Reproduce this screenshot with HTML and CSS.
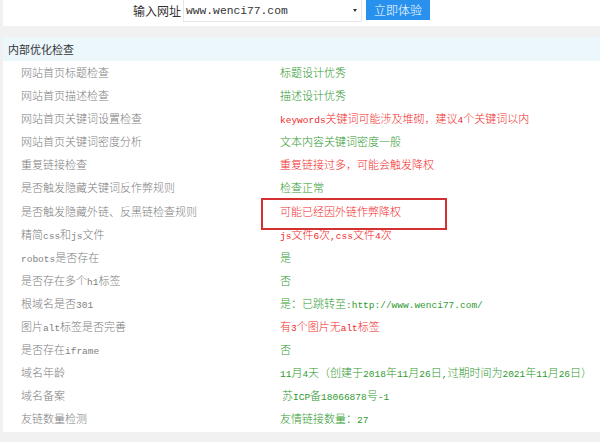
FILE: index.html
```html
<!DOCTYPE html>
<html lang="zh-CN">
<head>
  <meta charset="UTF-8">
  <title>内部优化检查</title>
  <link rel="stylesheet" href="styles.css">
</head>
<body>
  <!-- 顶部查询栏 -->
  <div class="search-bar">
    <span class="search-label">输入网址</span>
    <div class="search-input">
      <span class="url">www.wenci77.com</span>
      <span class="arrow"></span>
    </div>
    <button class="search-btn">立即体验</button>
  </div>

  <!-- 内部优化检查 -->
  <div class="panel">
    <div class="panel-title">内部优化检查</div>
    <ul class="check-list">
      <li><span class="name">网站首页标题检查</span><span class="ok">标题设计优秀</span></li>
      <li><span class="name">网站首页描述检查</span><span class="ok">描述设计优秀</span></li>
      <li><span class="name">网站首页关键词设置检查</span><span class="bad"><span class="en">keywords</span>关键词可能涉及堆砌，建议<span class="en">4</span>个关键词以内</span></li>
      <li><span class="name">网站首页关键词密度分析</span><span class="ok">文本内容关键词密度一般</span></li>
      <li><span class="name">重复链接检查</span><span class="bad">重复链接过多，可能会触发降权</span></li>
      <li><span class="name">是否触发隐藏关键词反作弊规则</span><span class="ok">检查正常</span></li>
      <li><span class="name">是否触发隐藏外链、反黑链检查规则</span><span class="bad marked">可能已经因外链作弊降权</span></li>
      <li><span class="name">精简<span class="en">css</span>和<span class="en">js</span>文件</span><span class="bad"><span class="en">js</span>文件<span class="en">6</span>次<span class="en">,css</span>文件<span class="en">4</span>次</span></li>
      <li><span class="name"><span class="en">robots</span>是否存在</span><span class="ok">是</span></li>
      <li><span class="name">是否存在多个<span class="en">h1</span>标签</span><span class="ok">否</span></li>
      <li><span class="name">根域名是否<span class="en">301</span></span><span class="ok">是：已跳转至<span class="en">:http://www.wenci77.com/</span></span></li>
      <li><span class="name">图片<span class="en">alt</span>标签是否完善</span><span class="bad">有<span class="en">3</span>个图片无<span class="en">alt</span>标签</span></li>
      <li><span class="name">是否存在<span class="en">iframe</span></span><span class="ok">否</span></li>
      <li><span class="name">域名年龄</span><span class="ok"><span class="en">11</span>月<span class="en">4</span>天（创建于<span class="en">2018</span>年<span class="en">11</span>月<span class="en">26</span>日<span class="en">,</span>过期时间为<span class="en">2021</span>年<span class="en">11</span>月<span class="en">26</span>日）</span></li>
      <li><span class="name">域名备案</span><span class="ok indent">苏<span class="en">ICP</span>备<span class="en">18066878</span>号<span class="en">-1</span></span></li>
      <li><span class="name">友链数量检测</span><span class="ok">友情链接数量：<span class="en">27</span></span></li>
    </ul>
  </div>
</body>
</html>
```

FILE: styles.css
```css
* {
  margin: 0;
  padding: 0;
  box-sizing: border-box;
}

body {
  width: 600px;
  height: 442px;
  overflow: hidden;
  background: #f1f1f1;
  padding-left: 3px;
  font-family: "Noto Sans CJK SC", "Noto Sans", sans-serif;
  font-size: 11px;
  color: #333;
}

/* 顶部查询栏 */
.search-bar {
  height: 26px;
  background: #fff;
  display: flex;
  align-items: flex-start;
  padding-left: 130px;
}

.search-label {
  font-size: 12px;
  line-height: 22px;
  color: #333;
  width: 50px;
}

.search-input {
  width: 179px;
  height: 22px;
  border: 1px solid #e8e8e8;
  border-top: none;
  background: #fff;
  display: flex;
  align-items: center;
  padding-left: 2px;
}

.url {
  font-family: "Liberation Mono", monospace;
  font-size: 11.3px;
  color: #333;
}

.arrow {
  margin-left: auto;
  margin-right: 4px;
  width: 0;
  height: 0;
  border-left: 2.5px solid transparent;
  border-right: 2.5px solid transparent;
  border-top: 3px solid #333;
}

.search-btn {
  margin-left: 4px;
  width: 64px;
  height: 20px;
  border: none;
  background: #2891ee;
  color: #fff;
  font-family: "Noto Sans CJK SC", sans-serif;
  font-size: 12px;
  font-weight: 300;
  line-height: 20px;
}

/* 检查面板 */
.panel {
  margin-top: 11px;
  background: #fff;
  padding-bottom: 1px;
}

.panel-title {
  height: 24px;
  line-height: 24px;
  padding-left: 5px;
  background: #ecf7fc;
  color: #333;
  font-size: 11px;
}

.check-list {
  list-style: none;
  font-weight: 300;
}

.check-list li {
  display: grid;
  grid-template-columns: 259px 1fr;
  height: 23.1px;
  line-height: 23.1px;
  padding-left: 18px;
  white-space: nowrap;
}

.name {
  color: #808080;
}

.ok {
  color: #2f9a2f;
}

.bad {
  color: #f22a2a;
}

.indent {
  padding-left: 2px;
}

.en {
  font-family: "Liberation Mono", monospace;
  font-size: 9.5px;
  font-weight: 400;
}

/* 标注框 */
.marked {
  position: relative;
}

.marked::after {
  content: "";
  position: absolute;
  left: -19px;
  top: -2px;
  width: 182px;
  height: 28px;
  border: 2px solid #d4302f;
}
```
